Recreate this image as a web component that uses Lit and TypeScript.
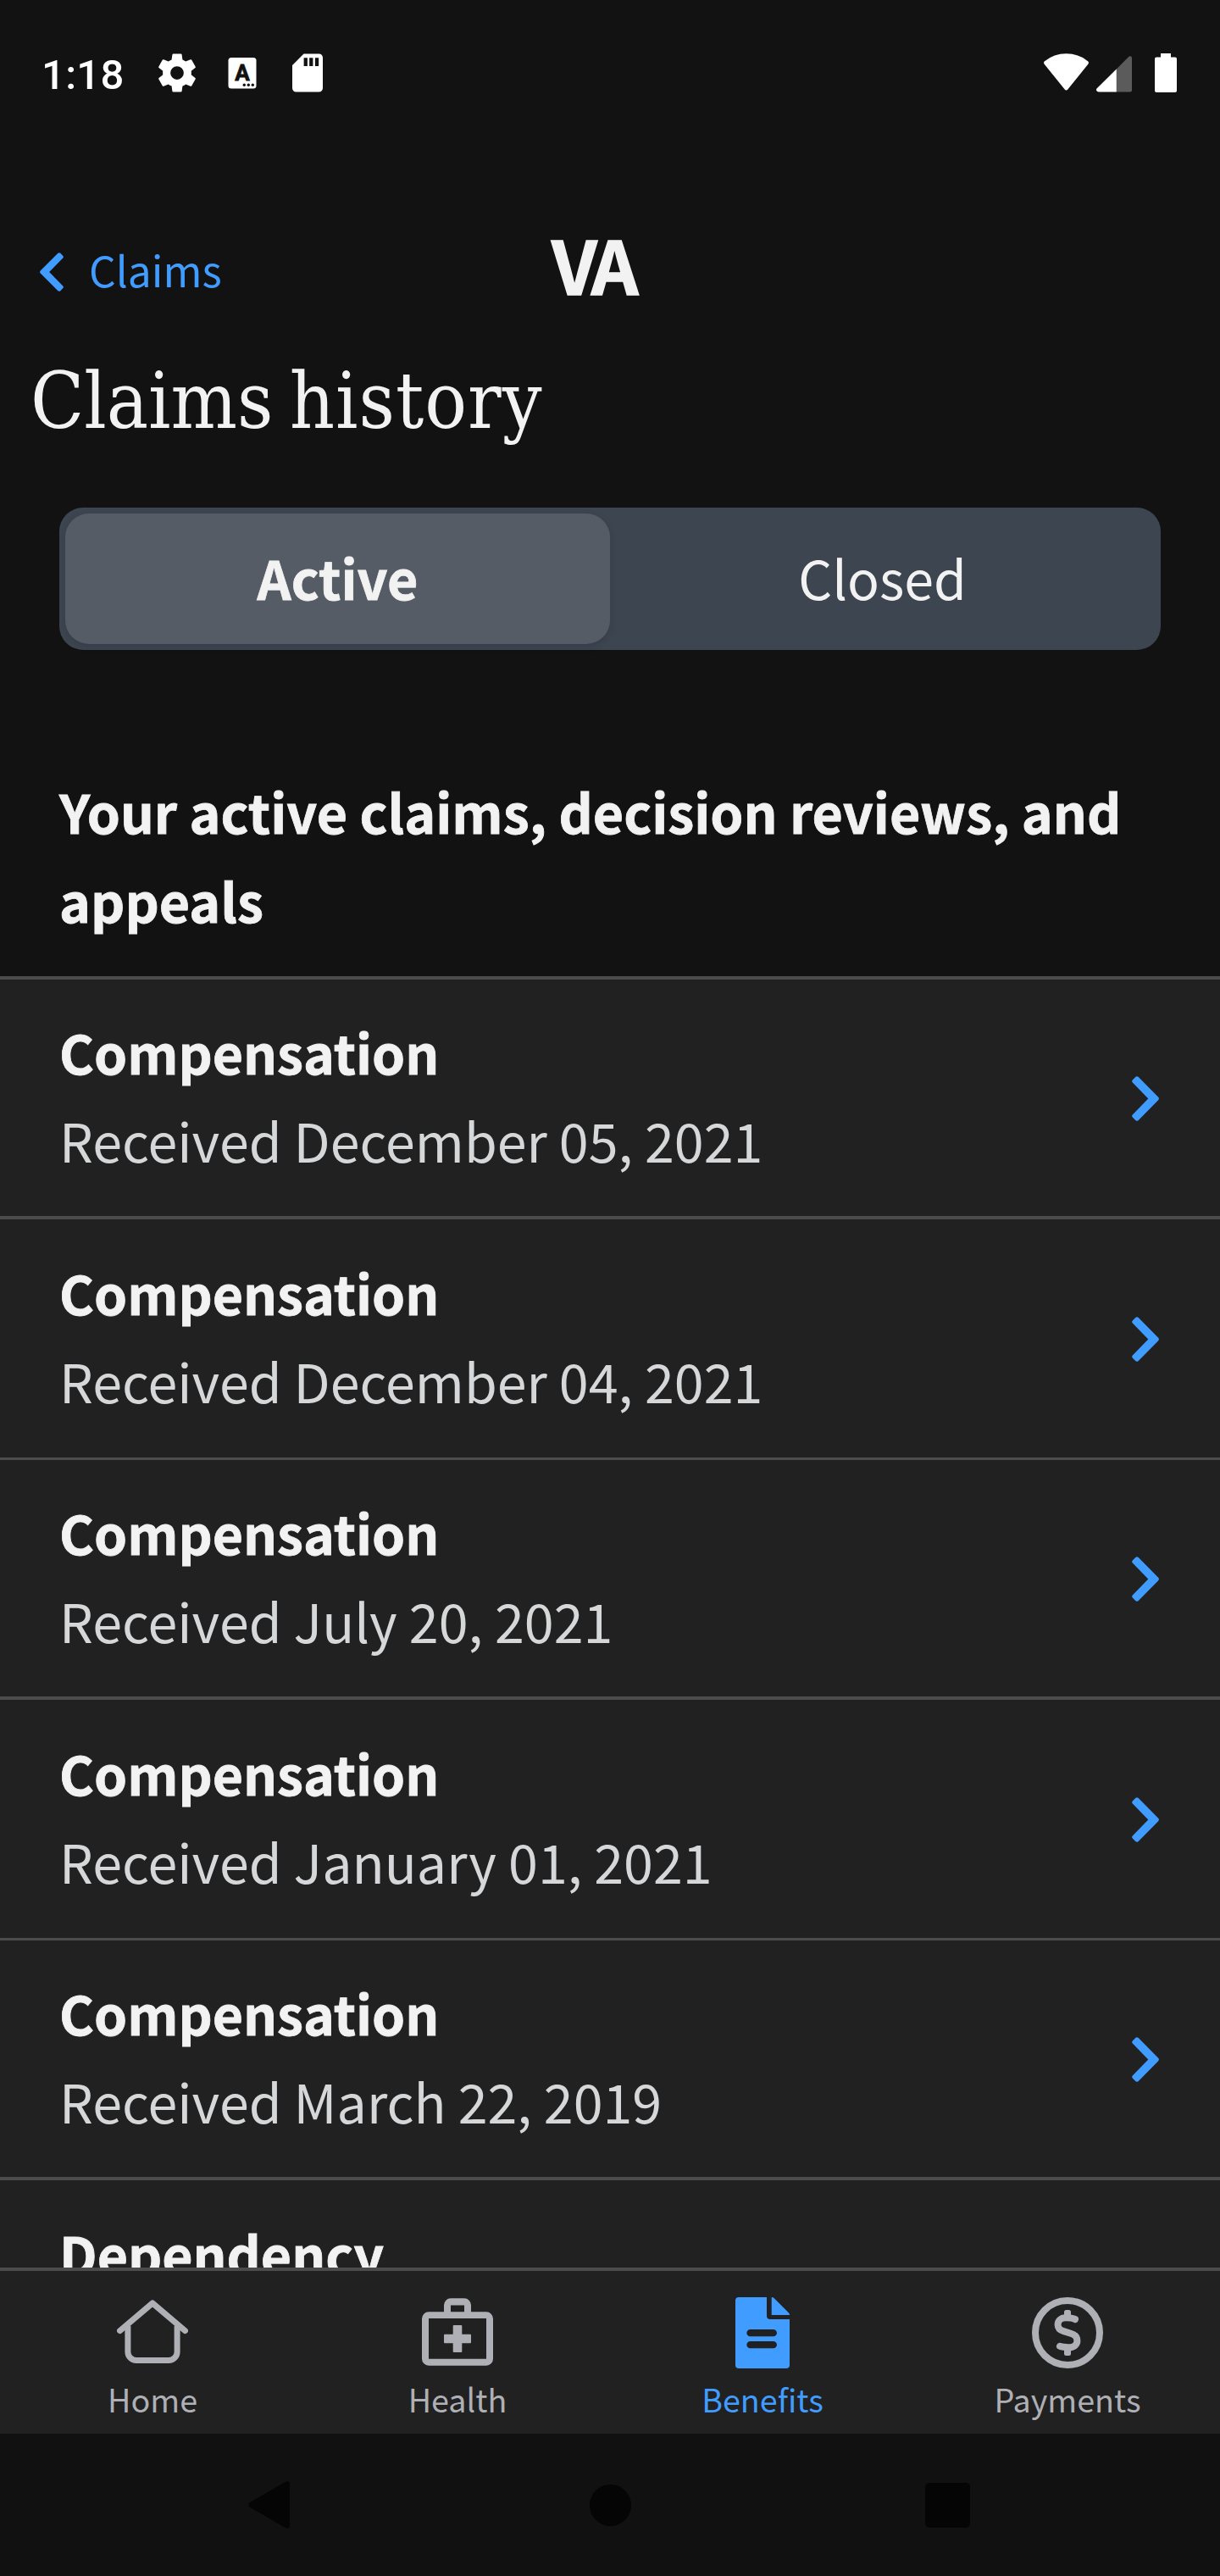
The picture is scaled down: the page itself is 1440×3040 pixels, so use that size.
import { LitElement, html, css, svg, nothing } from "lit";
import { customElement, state } from "lit/decorators.js";
import { classMap } from "lit/directives/class-map.js";

interface Claim {
  title: string;
  received: string;
}

interface Tab {
  label: string;
  icon: unknown;
}

const CLAIMS: Claim[] = [
  { title: "Compensation", received: "Received December 05, 2021" },
  { title: "Compensation", received: "Received December 04, 2021" },
  { title: "Compensation", received: "Received July 20, 2021" },
  { title: "Compensation", received: "Received January 01, 2021" },
  { title: "Compensation", received: "Received March 22, 2019" },
  { title: "Dependency", received: "" },
];

const CHEVRON =
  "M4.2 1Q5.5-.4 7.5.8L31.2 24.8Q32.6 26.5 31.2 28.2L7.5 52.2Q5.5 53.4 4.2 52L.8 48.5Q-.5 47 .8 45.4L19.3 26.5.8 7.6Q-.5 6 .8 4.5Z";

const homeIcon = svg`
  <g fill="none" stroke="currentColor" stroke-width="7" stroke-linecap="round" stroke-linejoin="round">
    <path d="M3.5 39.6 42 7 80.5 39.6" />
    <path d="M12.9 34V64.5a10 10 0 0 0 10 10H61.1a10 10 0 0 0 10-10V34" stroke-linecap="butt" />
  </g>`;

const healthIcon = svg`
  <path fill="currentColor" fill-rule="evenodd"
    d="M26 17.3V9.3a8 8 0 0 1 8-8H50a8 8 0 0 1 8 8v8h18a8 8 0 0 1 8 8V72.7a8 8 0 0 1-8 8H8a8 8 0 0 1-8-8V25.3a8 8 0 0 1 8-8ZM34 17.3H50V9.6H34ZM8 25V72.7H76V25Z" />
  <path fill="currentColor" d="M37.7 33h8.6a1 1 0 0 1 1 1v9.7H57a1 1 0 0 1 1 1v8.6a1 1 0 0 1-1 1H47.3V64a1 1 0 0 1-1 1H37.7a1 1 0 0 1-1-1V54.3H27a1 1 0 0 1-1-1V44.7a1 1 0 0 1 1-1h9.7V34a1 1 0 0 1 1-1Z" />`;

const benefitsIcon = svg`
  <path fill="currentColor" fill-rule="evenodd"
    d="M14 0H47V22a4 4 0 0 0 4 4H74V80a4 4 0 0 1-4 4H14a4 4 0 0 1-4-4V4a4 4 0 0 1 4-4ZM27.5 38a4.15 4.15 0 0 0 0 8.3H54.8a4.15 4.15 0 0 0 0-8.3ZM27.5 52a4.15 4.15 0 0 0 0 8.3H54.8a4.15 4.15 0 0 0 0-8.3Z" />
  <path fill="currentColor" d="M52.7 0Q54.5 0 55.8 1.3L72.8 18.2Q74 19.5 74 21H52.7Z" />`;

const paymentsIcon = svg`
  <g fill="none" stroke="currentColor" stroke-width="8" stroke-linecap="round" stroke-linejoin="round">
    <circle cx="42" cy="42" r="38" />
    <path d="M51 26C47.5 24.4 43 24.3 40 24.3 34 24.3 30.6 28 30.6 32.5 30.6 37 33.5 39 37.5 40.2L46.500 43C51 44.4 53.4 47 53.4 51.5 53.4 56 49.5 59.2 44 59.2 40 59.2 36 59 33 57.8" />
  </g>
  <rect x="38" y="15" width="8" height="11" rx="2.5" fill="currentColor" />
  <rect x="38" y="58" width="8" height="11" rx="2.5" fill="currentColor" />`;

const TABS: Tab[] = [
  { label: "Home", icon: homeIcon },
  { label: "Health", icon: healthIcon },
  { label: "Benefits", icon: benefitsIcon },
  { label: "Payments", icon: paymentsIcon },
];

@customElement("status-bar")
export class StatusBar extends LitElement {
  static styles = css`
    :host {
      display: flex;
      justify-content: space-between;
      align-items: flex-start;
      height: 140px;
      padding: 59px 51px 0 49px;
      box-sizing: border-box;
      color: #fff;
    }
    .group {
      display: flex;
      align-items: flex-start;
    }
    .time {
      width: 133.3px;
      padding-top: 1px;
      font: 500 49px/57px Roboto, sans-serif;
      letter-spacing: 0.3px;
    }
    .notices {
      display: flex;
      gap: 23px;
    }
    svg {
      display: block;
      fill: #fff;
    }
    .badge {
      font: 700 26px Roboto, sans-serif;
      fill: #121212;
      stroke: #121212;
      stroke-width: 0.8px;
    }
    .wifi {
      margin-top: 4px;
    }
    .signal {
      margin: 6.5px 27px 0 9px;
    }
    .battery {
      margin-top: 4px;
    }
  `;

  render() {
    return html`
      <div class="group">
        <span class="time">1:18</span>
        <span class="notices">
          <svg width="54" height="54" viewBox="0 0 24 24">
            <path
              d="M19.43 12.98c.04-.32.07-.64.07-.98s-.03-.66-.07-.98l2.11-1.65c.19-.15.24-.42.12-.64l-2-3.46c-.12-.22-.39-.3-.61-.22l-2.49 1c-.52-.4-1.08-.73-1.69-.98l-.38-2.65C14.46 2.18 14.25 2 14 2h-4c-.25 0-.46.18-.49.42l-.38 2.65c-.61.25-1.17.59-1.69.98l-2.49-1c-.23-.09-.49 0-.61.22l-2 3.46c-.13.22-.07.49.12.64l2.11 1.65c-.04.32-.07.65-.07.98s.03.66.07.98l-2.11 1.65c-.19.15-.24.42-.12.64l2 3.46c.12.22.39.3.61.22l2.49-1c.52.4 1.08.73 1.69.98l.38 2.65c.03.24.24.42.49.42h4c.25 0 .46-.18.49-.42l.38-2.65c.61-.25 1.17-.59 1.69-.98l2.49 1c.23.09.49 0 .61-.22l2-3.46c.12-.22.07-.49-.12-.64zM12 15.5a3.5 3.5 0 1 1 0-7 3.5 3.5 0 0 1 0 7z"
            />
          </svg>
          <svg width="54" height="54" viewBox="0 0 54 54">
            <rect x="10.5" y="9" width="33" height="36.5" rx="3.5" />
            <text class="badge" x="27" y="35.5" text-anchor="middle">A</text>
            <g fill="#121212">
              <circle cx="29.3" cy="41.3" r="1.7" />
              <circle cx="34.3" cy="41.3" r="1.7" />
              <circle cx="39.3" cy="41.3" r="1.7" />
            </g>
          </svg>
          <svg width="54" height="54" viewBox="0 0 24 24">
            <path
              fill-rule="evenodd"
              d="M18 2h-8L4 8V20c0 1.1.9 2 2 2h12c1.1 0 2-.9 2-2V4c0-1.1-.9-2-2-2zM10.050 4.100h1.9v4.3h-1.9zM12.950 4.100h1.9v4.3h-1.9zM15.950 4.100h1.9v4.3h-1.9z"
            />
          </svg>
        </span>
      </div>
      <div class="group">
        <svg class="wifi" width="53" height="44" viewBox="0 0 53 44">
          <path
            d="M26.5 43.5Q25.4 43.5 24.7 42.4L.7 12.8Q-.8 10.8 1 9.3 12 .3 26.5.3T52 9.3Q53.8 10.8 52.3 12.8L28.3 42.4Q27.6 43.5 26.5 43.5Z"
          />
        </svg>
        <svg class="signal" width="42" height="43" viewBox="0 0 42 43">
          <path
            fill="#5b5b5b"
            d="M38 1.2Q39.5-.2 41 .6 42 1.2 42 2.5V40.5Q42 42.5 40 42.5H23.8V15.5Z"
          />
          <path d="M23.8 15.5V42.5H3Q.8 42.5.1 40.8-.4 39.4 1 38Z" />
        </svg>
        <svg class="battery" width="26" height="46" viewBox="0 0 26 46">
          <path d="M7 0h12v4.500h5q2 0 2 2V44q0 2-2 2H2q-2 0-2-2V6.500q0-2 2-2h5z" />
        </svg>
      </div>
    `;
  }
}

@customElement("app-root")
export class AppRoot extends LitElement {
  static styles = css`
    :host {
      display: flex;
      flex-direction: column;
      width: 1440px;
      height: 3040px;
      overflow: hidden;
      background: #121212;
      color: #f2f2f2;
      font-family: "Noto Sans CJK JP", "Noto Sans", sans-serif;
      font-size: 62.65px;
      line-height: 105px;
    }
    svg {
      display: block;
      flex: none;
    }
    .header {
      display: grid;
      grid-template-columns: 604px auto 1fr;
      align-items: start;
      height: 100px;
      padding: 130px 0 0 47px;
    }
    .back {
      display: flex;
      align-items: flex-start;
      gap: 30px;
      color: #409cff;
      font-size: 49.7px;
      line-height: 72px;
    }
    .back svg {
      margin-top: 28px;
    }
    .back span {
      padding-top: 11px;
    }
    .logo {
      font-size: 87px;
      font-weight: 700;
      line-height: 80px;
      letter-spacing: -5.5px;
      -webkit-text-stroke: 1.4px #f2f2f2;
    }
    .title {
      margin: 50px 0 0 36px;
      font: 400 92px/107px "DejaVu Serif Condensed", "DejaVu Serif", serif;
      font-stretch: condensed;
      white-space: nowrap;
      word-spacing: -7px;
    }
    .title span {
      letter-spacing: 1px;
    }
    .segments {
      display: grid;
      grid-template-columns: 1fr 1fr;
      box-sizing: border-box;
      height: 168px;
      margin: 72px 70px 0;
      padding: 7px;
      border-radius: 28px;
      background: #3d4551;
    }
    .segment {
      display: flex;
      align-items: center;
      justify-content: center;
      padding-bottom: 6px;
      border-radius: 28px;
    }
    .segment.on {
      background: #565c65;
      font-weight: 700;
      box-shadow: 0 3px 10px rgba(0, 0, 0, 0.12);
      -webkit-text-stroke: 0.8px #f2f2f2;
    }
    .heading {
      margin: 0;
      padding: 137px 70px 38px;
      font-size: inherit;
      font-weight: 700;
      letter-spacing: 0.02px;
      -webkit-text-stroke: 0.8px #f2f2f2;
    }
    .list {
      height: 1524px;
      margin: 0;
      padding: 0;
      overflow: hidden;
      list-style: none;
      background: #212121;
    }
    .claim {
      display: flex;
      align-items: center;
      justify-content: space-between;
      box-sizing: border-box;
      height: 285px;
      padding: 0 72px 0 70px;
      border-top: 4px solid #4c4c4c;
      line-height: 104px;
    }
    .claim:nth-child(odd) {
      height: 282px;
      border-top-width: 3px;
    }
    .claim:first-child {
      height: 283px;
      border-top-width: 4px;
    }
    .claim:last-child {
      height: 283px;
      border-top-width: 4px;
    }
    .text {
      align-self: flex-start;
      height: 208px;
      padding-top: 33px;
    }
    .claim:nth-child(even) .text {
      padding-top: 34px;
    }
    .name {
      font-size: 62.5px;
      font-weight: 700;
      -webkit-text-stroke: 0.8px #f2f2f2;
    }
    .date {
      font-size: 62.75px;
      color: #d6d7d9;
    }
    .go {
      margin-top: 2px;
      color: #409cff;
    }
    .tabs {
      display: grid;
      grid-template-columns: repeat(4, 1fr);
      box-sizing: border-box;
      height: 196px;
      border-top: 4px solid #4c4c4c;
      background: #212121;
    }
    .tab {
      display: flex;
      flex-direction: column;
      align-items: center;
      gap: 8px;
      padding-top: 31px;
      color: #aeb0b5;
      font-size: 37.7px;
      line-height: 55px;
    }
    .tab.on {
      color: #409cff;
    }
    .system {
      display: flex;
      align-items: center;
      justify-content: space-between;
      box-sizing: border-box;
      height: 168px;
      padding: 0 295.5px 0 293px;
      background: #111;
      fill: #050505;
    }
  `;

  @state() private segment = "Active";
  @state() private tab = "Benefits";

  private renderClaim(claim: Claim) {
    return html`
      <li class="claim">
        <div class="text">
          <div class="name">${claim.title}</div>
          ${claim.received
            ? html`<div class="date">${claim.received}</div>`
            : nothing}
        </div>
        ${claim.received
          ? html`<svg class="go" width="32" height="53" viewBox="0 0 32 53">
              <path fill="currentColor" d=${CHEVRON} />
            </svg>`
          : nothing}
      </li>
    `;
  }

  render() {
    return html`
      <status-bar></status-bar>
      <div class="header">
        <div class="back">
          <svg width="28" height="46" viewBox="0 0 32 53" preserveAspectRatio="none">
            <path fill="currentColor" transform="matrix(-1 0 0 1 32 0)" d=${CHEVRON} />
          </svg>
          <span>Claims</span>
        </div>
        <div class="logo">VA</div>
      </div>
      <div class="title">Claims <span>history</span></div>
      <div class="segments">
        ${["Active", "Closed"].map(
          (name) => html`<div
            class=${classMap({ segment: true, on: name === this.segment })}
            @click=${() => (this.segment = name)}
          >
            ${name}
          </div>`
        )}
      </div>
      <h2 class="heading">Your active claims, decision reviews, and appeals</h2>
      <ul class="list">
        ${CLAIMS.map((claim) => this.renderClaim(claim))}
      </ul>
      <nav class="tabs">
        ${TABS.map(
          (tab) => html`<div
            class=${classMap({ tab: true, on: tab.label === this.tab })}
            @click=${() => (this.tab = tab.label)}
          >
            <svg width="84" height="84" viewBox="0 0 84 84">${tab.icon}</svg>
            <span>${tab.label}</span>
          </div>`
        )}
      </nav>
      <div class="system">
        <svg width="56" height="56" viewBox="0 0 56 56">
          <path d="M1.5 25.5 43.5 1Q49 -1.5 49 4V52Q49 57.5 43.5 55L1.5 30.5Q-1 28 1.5 25.5Z" />
        </svg>
        <svg width="49" height="49" viewBox="0 0 49 49">
          <circle cx="24.5" cy="24.5" r="24.5" />
        </svg>
        <svg width="53" height="53" viewBox="0 0 53 53">
          <rect width="53" height="53" rx="5" />
        </svg>
      </div>
    `;
  }
}
